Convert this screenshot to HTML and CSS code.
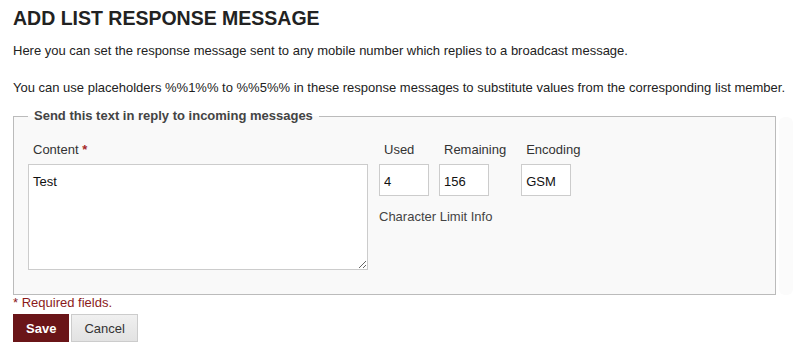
FILE: index.html
```html
<!DOCTYPE html>
<html lang="en">
<head>
    <meta charset="UTF-8">
    <meta name="viewport" content="width=device-width, initial-scale=1.0">
    <title>Add List Response Message</title>
    <link rel="stylesheet" href="styles.css">
</head>
<body>
    <div class="page">
        <h1>ADD LIST RESPONSE MESSAGE</h1>
        <p class="intro">Here you can set the response message sent to any mobile number which replies to a broadcast message.</p>
        <p class="intro last">You can use placeholders %%1%% to %%5%% in these response messages to substitute values from the corresponding list member.</p>

        <div class="form-row">
            <fieldset class="panel">
                <legend>Send this text in reply to incoming messages</legend>
                <div class="fields">
                    <div class="field">
                        <label class="label" for="content">Content <span class="req">*</span></label>
                        <textarea id="content" class="content-box">Test</textarea>
                    </div>
                    <div class="counters">
                        <div class="counter-row">
                            <div class="field">
                                <label class="label" for="used">Used</label>
                                <input type="text" id="used" class="small-input" value="4">
                            </div>
                            <div class="field">
                                <label class="label" for="remaining">Remaining</label>
                                <input type="text" id="remaining" class="small-input" value="156">
                            </div>
                            <div class="field">
                                <label class="label" for="encoding">Encoding</label>
                                <input type="text" id="encoding" class="small-input" value="GSM">
                            </div>
                        </div>
                        <div class="limit-info">Character Limit Info</div>
                    </div>
                </div>
            </fieldset>
            <div class="side-track"></div>
        </div>

        <div class="required-note"><span class="req">*</span> Required fields.</div>
        <div class="actions">
            <button class="btn btn-save">Save</button>
            <button class="btn btn-cancel">Cancel</button>
        </div>
    </div>
</body>
</html>
```

FILE: styles.css
```css
* {
    box-sizing: border-box;
}

body {
    margin: 0;
    font-family: 'Liberation Sans', Arial, sans-serif;
    font-size: 13px;
    line-height: 15px;
    color: #222;
    background: #fff;
}

.page {
    padding: 0 0 0 13px;
}

h1 {
    font-size: 19.5px;
    line-height: 23px;
    font-weight: bold;
    margin: 7px 0 13px;
    color: #222;
}

.intro {
    margin: 0 0 22px;
}

.intro.last {
    margin-bottom: 13px;
}

.form-row {
    display: flex;
}

.panel {
    flex: 1;
    margin: 0;
    min-width: 0;
    border: 1px solid #bbb;
    background-color: #f9f9f9;
    padding: 18px 14px 24px;
}

.panel legend {
    padding: 0 6px;
    font-weight: bold;
    line-height: 16px;
    color: #444;
}

.side-track {
    width: 14px;
    margin: 9px 0 0 3px;
    border-radius: 6px;
    background-color: #fbfbfb;
}

.fields {
    display: flex;
    gap: 11px;
}

.field {
    display: flex;
    flex-direction: column;
}

.label {
    padding: 0 5px;
    margin-bottom: 7px;
    color: #333;
}

.req {
    color: #a52a2a;
    font-weight: bold;
}

.content-box {
    display: block;
    width: 340px;
    height: 106px;
    padding: 9px 4px 4px;
    border: 1px solid #ccc;
    font-family: 'Liberation Sans', Arial, sans-serif;
    font-size: 13px;
    line-height: 15px;
    color: #111;
    background: #fff;
}

.counter-row {
    display: flex;
    gap: 10px;
}

.small-input {
    width: 50px;
    height: 32px;
    padding: 2px 4px 0;
    border: 1px solid #ccc;
    font-family: 'Liberation Sans', Arial, sans-serif;
    font-size: 13px;
    color: #111;
    background: #fff;
}

.limit-info {
    margin-top: 13px;
    color: #444;
}

.required-note {
    color: #8b1a1a;
    margin: 0 0 4px;
}

.required-note .req {
    color: #8b1a1a;
    font-weight: normal;
}

.actions {
    display: flex;
    gap: 2px;
}

.btn {
    height: 28px;
    padding: 0 12px;
    font-family: 'Liberation Sans', Arial, sans-serif;
    font-size: 13px;
    cursor: pointer;
}

.btn-save {
    background-color: #6a1518;
    border: 1px solid #6a1518;
    color: #fff;
    font-weight: bold;
}

.btn-cancel {
    padding: 0 12px;
    background: linear-gradient(#f0f0f0, #e2e2e2);
    border: 1px solid #ccc;
    color: #333;
}
```
